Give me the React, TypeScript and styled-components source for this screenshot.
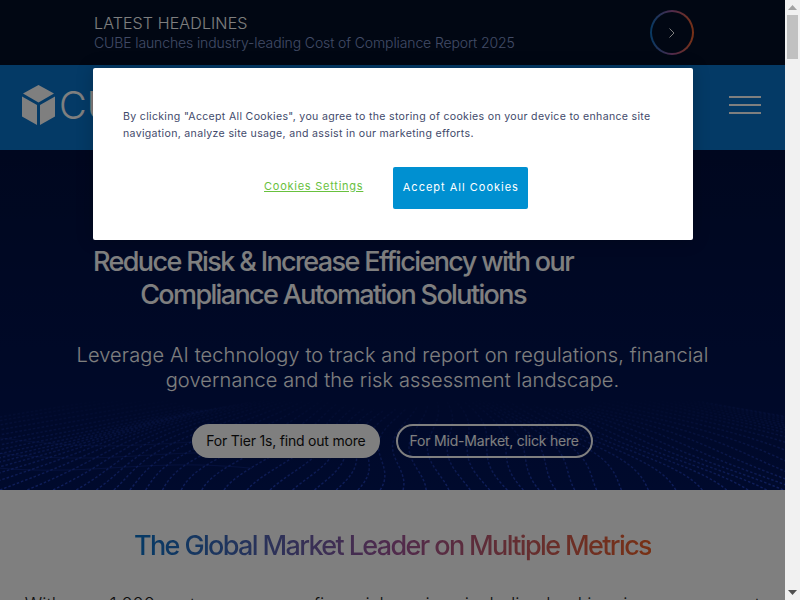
import styled, { createGlobalStyle } from "styled-components";

const GlobalStyle = createGlobalStyle`
  html, body {
    margin: 0;
    padding: 0;
    height: 100%;
    overflow: hidden;
    background: #fff;
    font-family: Inter, "Liberation Sans", sans-serif;
  }
  * {
    box-sizing: border-box;
  }
`;

const Viewport = styled.div`
  display: flex;
  height: 100vh;
`;

const Page = styled.div`
  position: relative;
  flex: 1;
  min-width: 0;
  overflow: hidden;
`;

const Scrollbar = styled.div`
  width: 15px;
  background-color: #f1f1f1;
  display: flex;
  flex-direction: column;
  align-items: center;
`;

const ScrollArrow = styled.div`
  height: 15px;
  display: flex;
  align-items: center;
  justify-content: center;
`;

const ScrollTrack = styled.div`
  flex: 1;
  align-self: stretch;
  padding: 0 2px;
`;

const ScrollThumb = styled.div`
  height: 44px;
  background-color: #c1c1c1;
`;

const TopBar = styled.div`
  height: 65px;
  background-color: #020f26;
  padding: 13px 91px 0 94px;
  display: flex;
  justify-content: space-between;
`;

const HeadlineText = styled.div`
  display: flex;
  flex-direction: column;
`;

const HeadlineTitle = styled.div`
  color: #fff;
  font-size: 16px;
  font-weight: 300;
  line-height: 20px;
  letter-spacing: 0.12px;
`;

const HeadlineLink = styled.a`
  color: #8497cc;
  font-size: 14px;
  font-weight: 300;
  line-height: 20px;
  letter-spacing: -0.12px;
`;

const CircleButton = styled.div`
  width: 44px;
  height: 45px;
  margin-top: -3px;
  border-radius: 50%;
  padding: 2px;
  background: linear-gradient(90deg, #0c72c4, #a0569a 50%, #f0622a);
  display: flex;
`;

const CircleInner = styled.div`
  flex: 1;
  border-radius: 50%;
  background-color: #020f26;
  display: flex;
  align-items: center;
  justify-content: center;
`;

const NavBar = styled.header`
  height: 85px;
  background-color: #0874cc;
  padding: 0 24px 6px 22px;
  display: flex;
  align-items: center;
  justify-content: space-between;
`;

const Logo = styled.div`
  display: flex;
  align-items: center;
  gap: 4px;
  color: #fff;
  font-size: 38px;
  font-weight: 300;
`;

const Burger = styled.div`
  width: 32px;
  display: flex;
  flex-direction: column;
  gap: 6px;
  margin-top: 1px;
`;

const BurgerLine = styled.span`
  height: 2px;
  background-color: #fff;
`;

const Hero = styled.section`
  position: relative;
  height: 340px;
  background: linear-gradient(180deg, #010f3e, #01145a);
  display: flex;
  flex-direction: column;
  align-items: center;
  overflow: hidden;
`;

const HeroWave = styled.svg`
  position: absolute;
  left: 0;
  top: 0;
`;

const HeroTitle = styled.h1`
  position: relative;
  width: 490px;
  margin: 95px 119px 0 0;
  color: #fff;
  font-size: 27px;
  font-weight: 500;
  line-height: 33px;
  letter-spacing: -1.63px;
  text-align: center;
`;

const HeroLead = styled.p`
  position: relative;
  width: 680px;
  margin: 32px 0 0;
  color: #fff;
  font-size: 20px;
  font-weight: 300;
  line-height: 25px;
  letter-spacing: 0.13px;
  text-align: center;
`;

const HeroActions = styled.div`
  position: relative;
  display: flex;
  gap: 16px;
  margin-top: 31px;
`;

const PillButton = styled.a<{ $solid?: boolean }>`
  height: 34px;
  padding: 0 12px 2px;
  border-radius: 17px;
  border: 2px solid #fff;
  display: flex;
  align-items: center;
  font-size: 14px;
  font-weight: 400;
  letter-spacing: -0.2px;
  color: ${(p) => (p.$solid ? "#111" : "#fff")};
  background-color: ${(p) => (p.$solid ? "#fff" : "transparent")};
`;

const MarketSection = styled.section`
  padding-top: 38px;
  background-color: #fff;
`;

const MarketTitle = styled.h2`
  width: fit-content;
  margin: 0 auto;
  font-size: 27px;
  font-weight: 500;
  line-height: 36px;
  letter-spacing: -1.63px;
  background: linear-gradient(90deg, #0874cc, #a0569a 50%, #f0622a);
  -webkit-background-clip: text;
  background-clip: text;
  color: transparent;
`;

const MarketBody = styled.p`
  margin: 26px 0 0;
  padding: 0 20px;
  color: #1c1c1c;
  font-size: 18px;
  font-weight: 300;
  line-height: 30px;
  letter-spacing: 0.03px;
  text-align: center;
`;

const Overlay = styled.div`
  position: absolute;
  inset: 0;
  background-color: rgba(0, 0, 0, 0.5);
`;

const CookieDialog = styled.div`
  position: absolute;
  left: 93px;
  top: 68px;
  width: 600px;
  height: 172px;
  padding: 40px 30px 0;
  background-color: #fff;
  border-radius: 2px;
  box-shadow: 0 0 18px rgba(0, 0, 0, 0.2);
`;

const CookieText = styled.p`
  margin: 0;
  color: #3f4a6b;
  font-size: 10.57px;
  line-height: 17px;
  letter-spacing: 0.32px;
`;

const CookieActions = styled.div`
  display: flex;
  align-items: center;
  margin-top: 25px;
  padding-left: 141px;
  gap: 30px;
`;

const SettingsLink = styled.a`
  color: #68c13e;
  font-size: 11px;
  letter-spacing: 0.75px;
  text-decoration: underline;
  margin-bottom: 4px;
`;

const AcceptButton = styled.button`
  width: 135px;
  height: 42px;
  padding: 0 0 2px;
  border: 0;
  border-radius: 2px;
  background-color: #0090d1;
  color: #fff;
  font-family: inherit;
  font-size: 11px;
  font-weight: 400;
  letter-spacing: 1px;
`;

// dotted mesh behind the hero buttons, lines lean in towards the middle going up
function wavePaths() {
  const cx = 420;
  const fan: string[] = [];
  for (let i = -14; i < 54; i++) {
    const base = i * 21 + Math.sin(i * 0.6) * 5;
    const height = 88 + Math.sin(i * 0.3) * 8;
    let d = "";
    for (let t = 0; t <= 1.001; t += 0.05) {
      const y = 340 - t * height;
      const x =
        base +
        (cx - base) * (0.4 * t + 0.2 * t * t) +
        Math.sin(t * 6 + i * 0.4) * 9;
      d += `${d ? "L" : "M"}${x.toFixed(1)} ${y.toFixed(1)}`;
    }
    fan.push(d);
  }
  const rows: string[] = [];
  for (let r = 0; r < 3; r++) {
    let d = "";
    for (let x = 0; x <= 260; x += 12) {
      const y = 288 + r * 13 + Math.sin(x / 55 + r * 0.5) * 5 + x * 0.03;
      d += `${d ? "L" : "M"}${x} ${y.toFixed(1)}`;
    }
    rows.push(d);
  }
  return { fan, rows };
}

function App() {
  const { fan, rows } = wavePaths();
  return (
    <Viewport>
      <GlobalStyle />
      <Page>
        <TopBar>
          <HeadlineText>
            <HeadlineTitle>LATEST HEADLINES</HeadlineTitle>
            <HeadlineLink>CUBE launches industry-leading Cost of Compliance Report 2025</HeadlineLink>
          </HeadlineText>
          <CircleButton>
            <CircleInner>
              <svg width="10" height="12" viewBox="0 0 10 12" fill="none">
                <path d="M2.5 1.5 7 6l-4.5 4.5" stroke="#fff" strokeWidth="1" />
              </svg>
            </CircleInner>
          </CircleButton>
        </TopBar>
        <NavBar>
          <Logo>
            <svg width="33" height="40" viewBox="0 0 33 40" fill="#fff">
              <path d="M16.5 0 32 8.6 16.5 17.4 1 8.6Z" />
              <path d="M0 11.5 15 20v20L0 31.4Z" />
              <path d="M33 11.5 18 20v20l15-8.6Z" />
            </svg>
            <span>CUBE</span>
          </Logo>
          <Burger>
            <BurgerLine />
            <BurgerLine />
            <BurgerLine />
          </Burger>
        </NavBar>
        <Hero>
          <HeroWave width="785" height="340" viewBox="0 0 785 340" fill="none">
            <defs>
              <linearGradient id="waveFade" x1="0" y1="250" x2="0" y2="340" gradientUnits="userSpaceOnUse">
                <stop offset="0" stopColor="#2c50e0" stopOpacity="0" />
                <stop offset="0.4" stopColor="#2c50e0" stopOpacity="0.28" />
                <stop offset="1" stopColor="#2c50e0" stopOpacity="0.7" />
              </linearGradient>
            </defs>
            {fan.map((d) => (
              <path
                key={d}
                d={d}
                stroke="url(#waveFade)"
                strokeWidth="1.4"
                strokeDasharray="2.5 2"
              />
            ))}
            {rows.map((d) => (
              <path key={d} d={d} stroke="url(#waveFade)" strokeWidth="1" strokeOpacity="0.5" />
            ))}
          </HeroWave>
          <HeroTitle>
            Reduce Risk &amp; Increase Efficiency with our Compliance Automation Solutions
          </HeroTitle>
          <HeroLead>
            Leverage AI technology to track and report on regulations, financial governance and the
            risk assessment landscape.
          </HeroLead>
          <HeroActions>
            <PillButton $solid>For Tier 1s, find out more</PillButton>
            <PillButton>For Mid-Market, click here</PillButton>
          </HeroActions>
        </Hero>
        <MarketSection>
          <MarketTitle>The Global Market Leader on Multiple Metrics</MarketTitle>
          <MarketBody>
            With over 1,000 customers across financial services including banking, insurance, asset
            management and fintech, CUBE is the trusted global leader in automated regulatory
            intelligence and change management.
          </MarketBody>
        </MarketSection>
        <Overlay />
        <CookieDialog>
          <CookieText>
            By clicking "Accept All Cookies", you agree to the storing of cookies on your device to
            enhance site navigation, analyze site usage, and assist in our marketing efforts.
          </CookieText>
          <CookieActions>
            <SettingsLink>Cookies Settings</SettingsLink>
            <AcceptButton>Accept All Cookies</AcceptButton>
          </CookieActions>
        </CookieDialog>
      </Page>
      <Scrollbar>
        <ScrollArrow>
          <svg width="9" height="5" viewBox="0 0 9 5" fill="#a3a3a3">
            <path d="M4.5 0 9 5H0Z" />
          </svg>
        </ScrollArrow>
        <ScrollTrack>
          <ScrollThumb />
        </ScrollTrack>
        <ScrollArrow>
          <svg width="9" height="5" viewBox="0 0 9 5" fill="#505050">
            <path d="M0 0h9L4.5 5Z" />
          </svg>
        </ScrollArrow>
      </Scrollbar>
    </Viewport>
  );
}

export default App;
